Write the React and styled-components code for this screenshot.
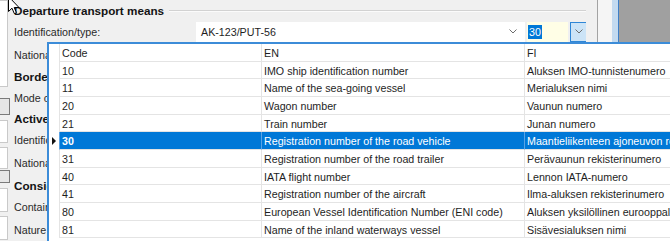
import React from 'react'
import styled, { createGlobalStyle } from 'styled-components'

const GlobalStyle = createGlobalStyle`
    html, body {
        margin: 0;
        padding: 0;
        background: #f0f0f0;
    }
`

const codes = [
    { code: '10', en: 'IMO ship identification number', fi: 'Aluksen IMO-tunnistenumero' },
    { code: '11', en: 'Name of the sea-going vessel', fi: 'Merialuksen nimi' },
    { code: '20', en: 'Wagon number', fi: 'Vaunun numero' },
    { code: '21', en: 'Train number', fi: 'Junan numero' },
    { code: '30', en: 'Registration number of the road vehicle', fi: 'Maantieliikenteen ajoneuvon rekisterinumero' },
    { code: '31', en: 'Registration number of the road trailer', fi: 'Perävaunun rekisterinumero' },
    { code: '40', en: 'IATA flight number', fi: 'Lennon IATA-numero' },
    { code: '41', en: 'Registration number of the aircraft', fi: 'Ilma-aluksen rekisterinumero' },
    { code: '80', en: 'European Vessel Identification Number (ENI code)', fi: 'Aluksen yksilöllinen eurooppalainen tunnistenumero' },
    { code: '81', en: 'Name of the inland waterways vessel', fi: 'Sisävesialuksen nimi' },
]

const selectedCode = '30'

const Chevron = () => (
    <svg width="8" height="5" viewBox="0 0 8 5">
        <polyline points="0.5,0.5 4,4 7.5,0.5" fill="none" stroke="#6d6d6d" strokeWidth="1" />
    </svg>
)

const App = () => {
    return(
        <>
            <GlobalStyle />
            <Page>
                <LeftStrip>
                    <StripBox $h={87} />
                    <StripBox $h={17} $gap={11} $button />
                    <StripBox $h={23} $gap={5} />
                    <StripBox $h={22} $gap={4} />
                    <StripBox $h={13} $gap={1} $button />
                    <StripBox $h={24} $gap={5} />
                    <StripBox $h={24} $gap={4} />
                </LeftStrip>
                <Form>
                    <TopEdge>
                        <EdgeSegment $w={77} />
                        <EdgeGap />
                        <EdgeSegment />
                    </TopEdge>
                    <FormGrid>
                        <GroupHeader>
                            <Heading>Departure transport means</Heading>
                            <Rule />
                        </GroupHeader>
                        <Label>Identification/type:</Label>
                        <Fields>
                            <Combo>
                                <span>AK-123/PUT-56</span>
                                <Chevron />
                            </Combo>
                            <CodeInput><Selection>30</Selection></CodeInput>
                            <DropButton><Chevron /></DropButton>
                        </Fields>
                        {/* rows below are covered by the popup from x=47 on */}
                        <Label $clip>Nationality:</Label>
                        <GroupHeader $clip><Heading>Border transport means</Heading></GroupHeader>
                        <Label $clip>Mode of transport:</Label>
                        <GroupHeader $clip><Heading>Active border transport means</Heading></GroupHeader>
                        <Label $clip>Identification/type:</Label>
                        <Label $clip>Nationality:</Label>
                        <GroupHeader $clip><Heading>Consignment</Heading></GroupHeader>
                        <Label $clip>Container indicator:</Label>
                        <Label $clip>Nature of transaction:</Label>
                    </FormGrid>
                </Form>
                <RightChrome>
                    <ChromeStripe $w={11} $bg="#f0f0f0" />
                    <ChromeStripe $w={1} $bg="#a3a3a3" />
                    <ChromeStripe $w={14} $bg="#f5f5f5" />
                    <ChromeStripe $w={6} $bg="#c3daf0" />
                    <ChromeStripe $w={1} $bg="#3f7fc6" />
                    <ChromeStripe $bg="#a0a0a0" />
                </RightChrome>

                <Cursor width="12" height="19" viewBox="0 0 12 19">
                    <path d="M0.5,0.5 L0.5,15.5 L4,12.2 L6.3,17.6 L8.4,16.7 L6.2,11.5 L11,11.5 Z" fill="#fff" stroke="#000" strokeWidth="1" />
                </Cursor>

                <Popup>
                    <GridRow>
                        <RowHeader />
                        <Cell>Code</Cell>
                        <Cell>EN</Cell>
                        <Cell>FI</Cell>
                    </GridRow>
                    {codes.map(row => {
                        const selected = row.code === selectedCode
                        return (
                            <GridRow key={row.code}>
                                <RowHeader>{selected && <Marker />}</RowHeader>
                                <Cell $selected={selected} $bold={selected}>{row.code}</Cell>
                                <Cell $selected={selected}>{row.en}</Cell>
                                <Cell $selected={selected}>{row.fi}</Cell>
                            </GridRow>
                        )
                    })}
                </Popup>
            </Page>
        </>
    )
}

const Page = styled.div`
    position: relative;
    width: 670px;
    height: 241px;
    overflow: hidden;
    display: flex;
    background: #f0f0f0;
    font-family: "Liberation Sans", Arial, sans-serif;
    font-size: 10.7px;
    color: #222;
`

const LeftStrip = styled.div`
    flex: none;
    width: 10px;
    display: flex;
    flex-direction: column;
`

const StripBox = styled.div`
    box-sizing: border-box;
    width: ${props => props.$button ? 10 : 8}px;
    height: ${props => props.$h}px;
    margin-top: ${props => props.$gap || 0}px;
    background: ${props => props.$button ? '#e6e6e6' : '#fff'};
    border: 1px solid ${props => props.$button ? '#7a7a7a' : '#c9c9c9'};
    border-left: none;
`

const Form = styled.div`
    flex: none;
    width: 576px;
    display: flex;
    flex-direction: column;
`

const TopEdge = styled.div`
    display: flex;
    height: 1px;
    padding-left: 190px;
`

const EdgeSegment = styled.div`
    flex: ${props => props.$w ? 'none' : 1};
    width: ${props => props.$w ? `${props.$w}px` : 'auto'};
    background: #c8c8c8;
`

const EdgeGap = styled.div`
    width: 5px;
`

const FormGrid = styled.div`
    display: grid;
    grid-template-columns: 186px 1fr;
    grid-template-rows: 20.5px 22.5px 23px 21.5px 20px 21px 22.5px 23px 22px 22px 24px;
`

const GroupHeader = styled.div`
    grid-column: 1 / -1;
    display: flex;
    align-items: center;
    gap: 5px;
    padding-left: 4px;
    ${props => props.$clip && `
        max-width: 37px;
        box-sizing: border-box;
        overflow: hidden;
    `}
`

const Heading = styled.div`
    font-weight: bold;
    font-size: 11.7px;
    color: #141414;
    white-space: nowrap;
`

const Rule = styled.div`
    flex: 1;
    border-top: 1px solid #d2d2d2;
    border-bottom: 1px solid #fbfbfb;
    margin-top: 1px;
`

const Label = styled.div`
    grid-column: ${props => props.$clip ? '1 / -1' : 'auto'};
    align-self: center;
    padding-left: 4px;
    white-space: nowrap;
    color: #2a2a2a;
    ${props => props.$clip && `
        max-width: 33px;
        overflow: hidden;
    `}
`

const Fields = styled.div`
    display: flex;
    align-items: center;
    gap: 2px;
`

const Combo = styled.div`
    box-sizing: border-box;
    width: 329px;
    height: 20px;
    display: flex;
    align-items: center;
    justify-content: space-between;
    padding: 0 8px 0 5px;
    background: #fff;
    color: #1e1e1e;
`

const CodeInput = styled.div`
    box-sizing: border-box;
    width: 41px;
    height: 20px;
    display: flex;
    align-items: center;
    padding-left: 1px;
    background: #fffee6;
`

const Selection = styled.span`
    background: #0078d7;
    color: #fff;
    padding: 1px 1px;
`

const DropButton = styled.div`
    box-sizing: border-box;
    width: 17px;
    height: 20px;
    display: flex;
    align-items: center;
    justify-content: center;
    background: #cce4f7;
    border: 1px solid #2f86d6;
`

const RightChrome = styled.div`
    flex: 1;
    display: flex;
`

const ChromeStripe = styled.div`
    flex: ${props => props.$w ? 'none' : 1};
    width: ${props => props.$w ? `${props.$w}px` : 'auto'};
    background: ${props => props.$bg};
`

const Cursor = styled.svg`
    position: absolute;
    left: 8px;
    top: -4px;
`

const Popup = styled.div`
    position: absolute;
    left: 47px;
    top: 42px;
    width: 660px;
    height: 220px;
    background: #fff;
    border-top: 2px solid #3c8cd8;
    border-left: 2px solid #3c8cd8;
    box-sizing: border-box;
`

const GridRow = styled.div`
    display: grid;
    grid-template-columns: 10px 202px 263px 1fr;
    height: 17.67px;
`

const RowHeader = styled.div`
    display: flex;
    align-items: center;
    justify-content: center;
    background: #fff;
`

const Marker = styled.div`
    width: 0;
    height: 0;
    margin-left: -1px;
    border-top: 4px solid transparent;
    border-bottom: 4px solid transparent;
    border-left: 4px solid #111;
`

const Cell = styled.div`
    box-sizing: border-box;
    padding: 2px 2px 0;
    border-bottom: 1px solid #e4e4e4;
    border-left: 1px solid ${props => props.$selected ? '#5aa3e4' : '#e4e4e4'};
    background: ${props => props.$selected ? '#0078d7' : '#fff'};
    color: ${props => props.$selected ? '#fff' : '#1e1e1e'};
    font-weight: ${props => props.$bold ? 'bold' : 'normal'};
    white-space: nowrap;
    overflow: hidden;
    line-height: 14px;
`

export default App
